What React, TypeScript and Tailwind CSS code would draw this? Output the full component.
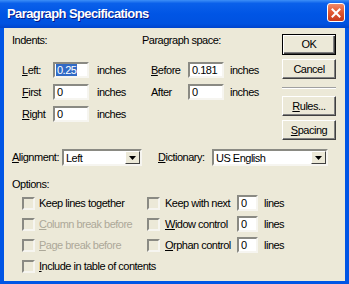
import React from "react";

const sunken =
  "border-2 border-t-[#8a8a83] border-l-[#8a8a83] border-b-[#f6f5f0] border-r-[#f6f5f0]";

const Field = ({ value, w, selected = false }: { value: string; w: string; selected?: boolean }) => (
  <div className={`${w} h-[16px] bg-white ${sunken} flex items-center pl-[1px]`}>
    {selected ? (
      <span className="bg-[#316ac5] text-white leading-[12px] px-[1px]">{value}</span>
    ) : (
      <span className="px-[1px] leading-[12px]">{value}</span>
    )}
  </div>
);

const Drop = ({ value, w }: { value: string; w: string }) => (
  <div className={`${w} h-[17px] bg-white ${sunken} flex items-center justify-between`}>
    <span className="pl-[2px] leading-[12px]">{value}</span>
    <div className="w-[15px] h-full bg-[#ece9d8] border border-t-white border-l-white border-b-[#404040] border-r-[#404040] flex items-center justify-center">
      <svg width="7" height="4" viewBox="0 0 7 4">
        <path d="M0 0h7L3.5 4z" fill="#000" />
      </svg>
    </div>
  </div>
);

const Btn = ({ children, isDefault = false, mt }: { children: React.ReactNode; isDefault?: boolean; mt: string }) => (
  <div
    className={`${mt} h-[20px] w-full flex items-center justify-center bg-[#ece9d8] ${
      isDefault
        ? "border border-black shadow-[inset_1px_1px_0_#fff,inset_-1px_-1px_0_#404040,inset_-2px_-2px_0_#808080]"
        : "border border-t-white border-l-white border-b-[#404040] border-r-[#404040] shadow-[inset_-1px_-1px_0_#808080]"
    }`}
  >
    {children}
  </div>
);

const Check = () => (
  <div className={`w-[13px] h-[13px] shrink-0 bg-[#ece9d8] ${sunken}`} />
);

const U = ({ c }: { c: string }) => <span className="underline underline-offset-[1px]">{c}</span>;

const App = () => {
  return (
    <div className="w-[349px] h-[284px] flex flex-col font-['Liberation_Sans',Arial,sans-serif] text-[11px] tracking-[-0.5px] text-black">
      {/* Title bar */}
      <div className="h-[28px] shrink-0 flex items-start justify-between bg-[linear-gradient(180deg,#3d8ff7_0%,#0a60ea_12%,#0055e5_50%,#0052e0_85%,#0044cc_100%)]">
        <span className="mt-[6px] ml-[7px] text-white font-bold text-[13px] tracking-[-0.6px] leading-[16px] [text-shadow:1px_1px_0_#0a1883]">
          Paragraph Specifications
        </span>
        <div className="mt-[3px] mr-[4px] w-[18px] h-[19px] rounded-[3px] border border-white bg-[linear-gradient(180deg,#f08a6a_0%,#e35a33_45%,#c6391b_100%)] flex items-center justify-center">
          <svg width="10" height="10" viewBox="0 0 10 10">
            <path d="M1.5 1.5l7 7M8.5 1.5l-7 7" stroke="#fff" strokeWidth="2" strokeLinecap="square" />
          </svg>
        </div>
      </div>

      {/* Body */}
      <div className="flex-1 bg-[#ece9d8] border-x-[4px] border-b-[3px] border-[#0055e5] pl-[8px] pt-[6px]">
        <div className="flex items-start">
          {/* Indents */}
          <div className="w-[130px]">
            <div className="h-[13px] leading-[13px]">Indents:</div>
            <div className="mt-[15px] flex flex-col gap-[6px]">
              <div className="h-[16px] flex items-center">
                <span className="ml-[10px] w-[31px]"><U c="L" />eft:</span>
                <Field value="0.25" w="w-[36px]" selected />
                <span className="ml-[8px]">inches</span>
              </div>
              <div className="h-[16px] flex items-center">
                <span className="ml-[10px] w-[31px]"><U c="F" />irst</span>
                <Field value="0" w="w-[36px]" />
                <span className="ml-[8px]">inches</span>
              </div>
              <div className="h-[16px] flex items-center">
                <span className="ml-[10px] w-[31px]"><U c="R" />ight</span>
                <Field value="0" w="w-[36px]" />
                <span className="ml-[8px]">inches</span>
              </div>
            </div>
          </div>

          {/* Paragraph space */}
          <div className="w-[140px]">
            <div className="h-[13px] leading-[13px]">Paragraph space:</div>
            <div className="mt-[15px] flex flex-col gap-[6px]">
              <div className="h-[16px] flex items-center">
                <span className="ml-[9px] w-[37px]"><U c="B" />efore</span>
                <Field value="0.181" w="w-[36px]" />
                <span className="ml-[6px]">inches</span>
              </div>
              <div className="h-[16px] flex items-center">
                <span className="ml-[9px] w-[37px]">After</span>
                <Field value="0" w="w-[36px]" />
                <span className="ml-[6px]">inches</span>
              </div>
            </div>
          </div>

          {/* Buttons */}
          <div className="w-[54px] flex flex-col">
            <Btn isDefault mt="mt-[0px] h-[21px]">OK</Btn>
            <Btn mt="mt-[4px]">Cancel</Btn>
            <div className="mt-[8px] h-[2px] border-t border-t-[#a0a0a0] border-b border-b-white" />
            <Btn mt="mt-[7px]"><U c="R" />ules...</Btn>
            <Btn mt="mt-[4px]"><U c="S" />pacing</Btn>
          </div>
        </div>

        {/* Alignment / Dictionary */}
        <div className="mt-[9px] h-[17px] flex items-center">
          <span className="w-[50px]"><U c="A" />lignment:</span>
          <Drop value="Left" w="w-[80px]" />
          <span className="ml-[16px] w-[54px]"><U c="D" />ictionary:</span>
          <Drop value="US English" w="w-[116px]" />
        </div>

        {/* Options */}
        <div className="mt-[12px] h-[13px] leading-[13px]">Options:</div>
        <div className="mt-[4px] flex flex-col gap-[5px] pl-[10px]">
          <div className="h-[16px] flex items-center">
            <div className="w-[125px] flex items-center gap-[4px]">
              <Check />
              <span>Keep lines together</span>
            </div>
            <Check />
            <span className="ml-[5px] w-[72px]">Keep with next</span>
            <Field value="0" w="w-[21px]" />
            <span className="ml-[6px]">lines</span>
          </div>
          <div className="h-[16px] flex items-center">
            <div className="w-[125px] flex items-center gap-[4px] text-[#aca899]">
              <Check />
              <span><U c="C" />olumn break before</span>
            </div>
            <Check />
            <span className="ml-[5px] w-[72px]"><U c="W" />idow control</span>
            <Field value="0" w="w-[21px]" />
            <span className="ml-[6px]">lines</span>
          </div>
          <div className="h-[16px] flex items-center">
            <div className="w-[125px] flex items-center gap-[4px] text-[#aca899]">
              <Check />
              <span><U c="P" />age break before</span>
            </div>
            <Check />
            <span className="ml-[5px] w-[72px]"><U c="O" />rphan control</span>
            <Field value="0" w="w-[21px]" />
            <span className="ml-[6px]">lines</span>
          </div>
          <div className="h-[16px] flex items-center gap-[4px]">
            <Check />
            <span><U c="I" />nclude in table of contents</span>
          </div>
        </div>
      </div>
    </div>
  );
};

export default App;
